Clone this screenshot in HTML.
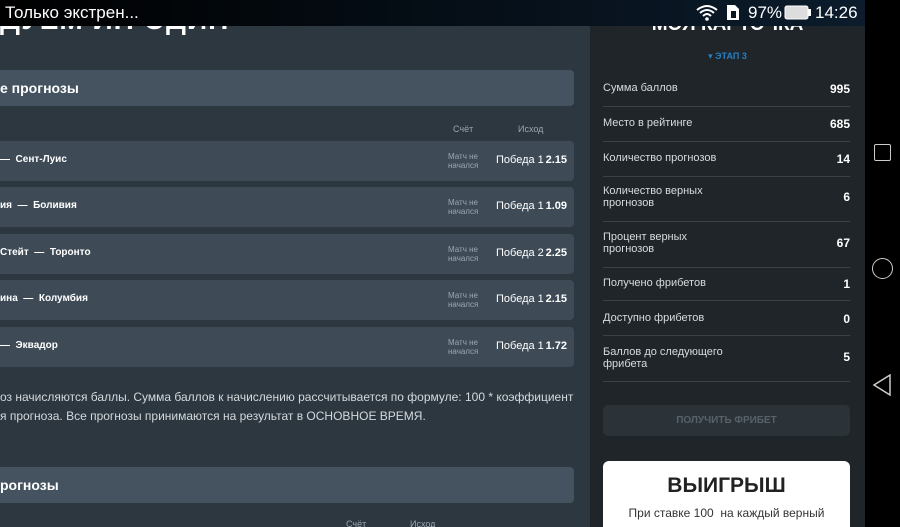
<!DOCTYPE html>
<html><head><meta charset="utf-8"><style>
*{margin:0;padding:0;box-sizing:border-box}
html,body{width:900px;height:527px;overflow:hidden}
body{background:#000;font-family:"Liberation Sans","DejaVu Sans",sans-serif;position:relative}
.main{position:absolute;left:0;top:0;width:590px;height:527px;background:#2c3740;overflow:hidden}
.side{position:absolute;left:590px;top:0;width:275px;height:527px;background:#1f2528;overflow:hidden}
.nav{position:absolute;left:865px;top:0;width:35px;height:527px;background:#000}
.status{position:absolute;left:0;top:0;width:865px;height:26px;background:linear-gradient(90deg,#000 0%,#06101a 60%,#0c1c2c 100%);color:#fff;font-size:17px}
.hdr{position:absolute;left:0;width:574px;height:36px;background:#44535f;border-radius:0 4px 4px 0;color:#fff;font-weight:bold;font-size:14px;line-height:36px}
.row{position:absolute;left:0;width:574px;height:40px;background:#3e4b57;border-radius:0 4px 4px 0;color:#fff;font-size:10px;font-weight:bold}
.row .t{position:absolute;left:0;top:13px}
.row .s{position:absolute;left:448px;top:11px;font-size:8px;font-weight:normal;color:#9aa6b0;line-height:9px}
.row .o{position:absolute;left:496px;top:13px;font-weight:normal;font-size:11px}
.row .k{position:absolute;right:7px;top:13px;font-size:11px}
.col{position:absolute;font-size:9px;color:#9aa6b0}
.st{position:absolute;left:13px;width:247px;border-bottom:1px solid #3a4247;color:#d8dcde;font-size:11px}
.st b{position:absolute;right:0;color:#fff;font-size:12px}
</style></head><body>
<div class="main">
  <div style="position:absolute;left:0;top:4px;color:#fff;font-weight:bold;font-size:28px;letter-spacing:1px">ДУЕМ ИН ОДИН</div>
  <div class="hdr" style="top:70px">е прогнозы</div>
  <div class="col" style="left:453px;top:124px">Счёт</div>
  <div class="col" style="left:518px;top:124px">Исход</div>
  <div class="row" style="top:141px"><span class="t">— &nbsp;Сент-Луис</span><span class="s">Матч не<br>начался</span><span class="o">Победа 1</span><span class="k">2.15</span></div>
  <div class="row" style="top:187px"><span class="t">ия &nbsp;— &nbsp;Боливия</span><span class="s">Матч не<br>начался</span><span class="o">Победа 1</span><span class="k">1.09</span></div>
  <div class="row" style="top:234px"><span class="t">Стейт &nbsp;— &nbsp;Торонто</span><span class="s">Матч не<br>начался</span><span class="o">Победа 2</span><span class="k">2.25</span></div>
  <div class="row" style="top:280px"><span class="t">ина &nbsp;— &nbsp;Колумбия</span><span class="s">Матч не<br>начался</span><span class="o">Победа 1</span><span class="k">2.15</span></div>
  <div class="row" style="top:327px"><span class="t">— &nbsp;Эквадор</span><span class="s">Матч не<br>начался</span><span class="o">Победа 1</span><span class="k">1.72</span></div>
  <div style="position:absolute;left:0;top:388px;color:#d4d9dc;font-size:12px;line-height:19px">оз начисляются баллы. Сумма баллов к начислению рассчитывается по формуле: 100 * коэффициент<br>я прогноза. Все прогнозы принимаются на результат в ОСНОВНОЕ ВРЕМЯ.</div>
  <div class="hdr" style="top:467px">рогнозы</div>
  <div class="col" style="left:346px;top:519px">Счёт</div>
  <div class="col" style="left:410px;top:519px">Исход</div>
</div>
<div class="side">
  <div style="position:absolute;left:0;width:275px;top:14px;text-align:center;color:#fff;font-weight:bold;font-size:19px">МОЯ КАРТОЧКА</div>
  <div style="position:absolute;left:0;width:275px;top:51px;text-align:center;color:#2a7fc0;font-size:9px;font-weight:bold">▾ ЭТАП 3</div>
  <div class="st" style="top:71px;height:36px;padding-top:11px">Сумма баллов<b>995</b></div>
  <div class="st" style="top:106px;height:36px;padding-top:11px">Место в рейтинге<b>685</b></div>
  <div class="st" style="top:141px;height:36px;padding-top:11px">Количество прогнозов<b>14</b></div>
  <div class="st" style="top:176px;height:46px;padding-top:9px;line-height:12px">Количество верных<br>прогнозов<b style="top:15px">6</b></div>
  <div class="st" style="top:222px;height:46px;padding-top:9px;line-height:12px">Процент верных<br>прогнозов<b style="top:15px">67</b></div>
  <div class="st" style="top:268px;height:33px;padding-top:9px">Получено фрибетов<b>1</b></div>
  <div class="st" style="top:301px;height:35px;padding-top:11px">Доступно фрибетов<b>0</b></div>
  <div class="st" style="top:336px;height:46px;padding-top:10px;line-height:12px">Баллов до следующего<br>фрибета<b style="top:15px">5</b></div>
  <div style="position:absolute;left:13px;top:405px;width:247px;height:31px;background:#2b3338;border-radius:5px;color:#56616a;font-size:10px;font-weight:bold;text-align:center;line-height:31px">ПОЛУЧИТЬ ФРИБЕТ</div>
  <div style="position:absolute;left:13px;top:461px;width:247px;height:66px;background:#fff;border-radius:6px 6px 0 0;text-align:center">
    <div style="font-size:21px;font-weight:bold;color:#222;margin-top:13px">ВЫИГРЫШ</div>
    <div style="font-size:12px;color:#333;margin-top:8px">При ставке 100 &nbsp;на каждый верный</div>
  </div>
</div>
<div class="status">
  <span style="position:absolute;left:5px;top:3px">Только экстрен...</span>
  <svg style="position:absolute;left:696px;top:4px" width="22" height="17" viewBox="0 0 22 17"><path d="M1 6Q11-2 21 6M4 9Q11 3 18 9M7 12Q11 8 15 12" stroke="#fff" stroke-width="2" fill="none"/><circle cx="11" cy="15" r="1.8" fill="#fff"/></svg>
  <svg style="position:absolute;left:726px;top:4px" width="14" height="17"><path d="M1 1h8l4 4v11H1z" fill="#fff"/><rect x="5" y="7" width="5" height="7" fill="#0a1520"/></svg>
  <span style="position:absolute;left:748px;top:3px">97%</span>
  <svg style="position:absolute;left:784px;top:5px" width="28" height="15"><rect x="1" y="1" width="23" height="13" rx="2" fill="#ddd" stroke="#fff"/><rect x="24" y="4" width="3" height="7" fill="#fff"/></svg>
  <span style="position:absolute;left:815px;top:3px">14:26</span>
</div>
<div class="nav">
  <div style="position:absolute;left:9px;top:144px;width:17px;height:17px;border:1.5px solid #ccc;border-radius:2px"></div>
  <div style="position:absolute;left:7px;top:258px;width:21px;height:21px;border:1.5px solid #ccc;border-radius:50%"></div>
  <svg style="position:absolute;left:7px;top:374px" width="20" height="22"><path d="M18 1L2 11L18 21Z" stroke="#ccc" stroke-width="1.5" fill="none"/></svg>
</div>
</body></html>
